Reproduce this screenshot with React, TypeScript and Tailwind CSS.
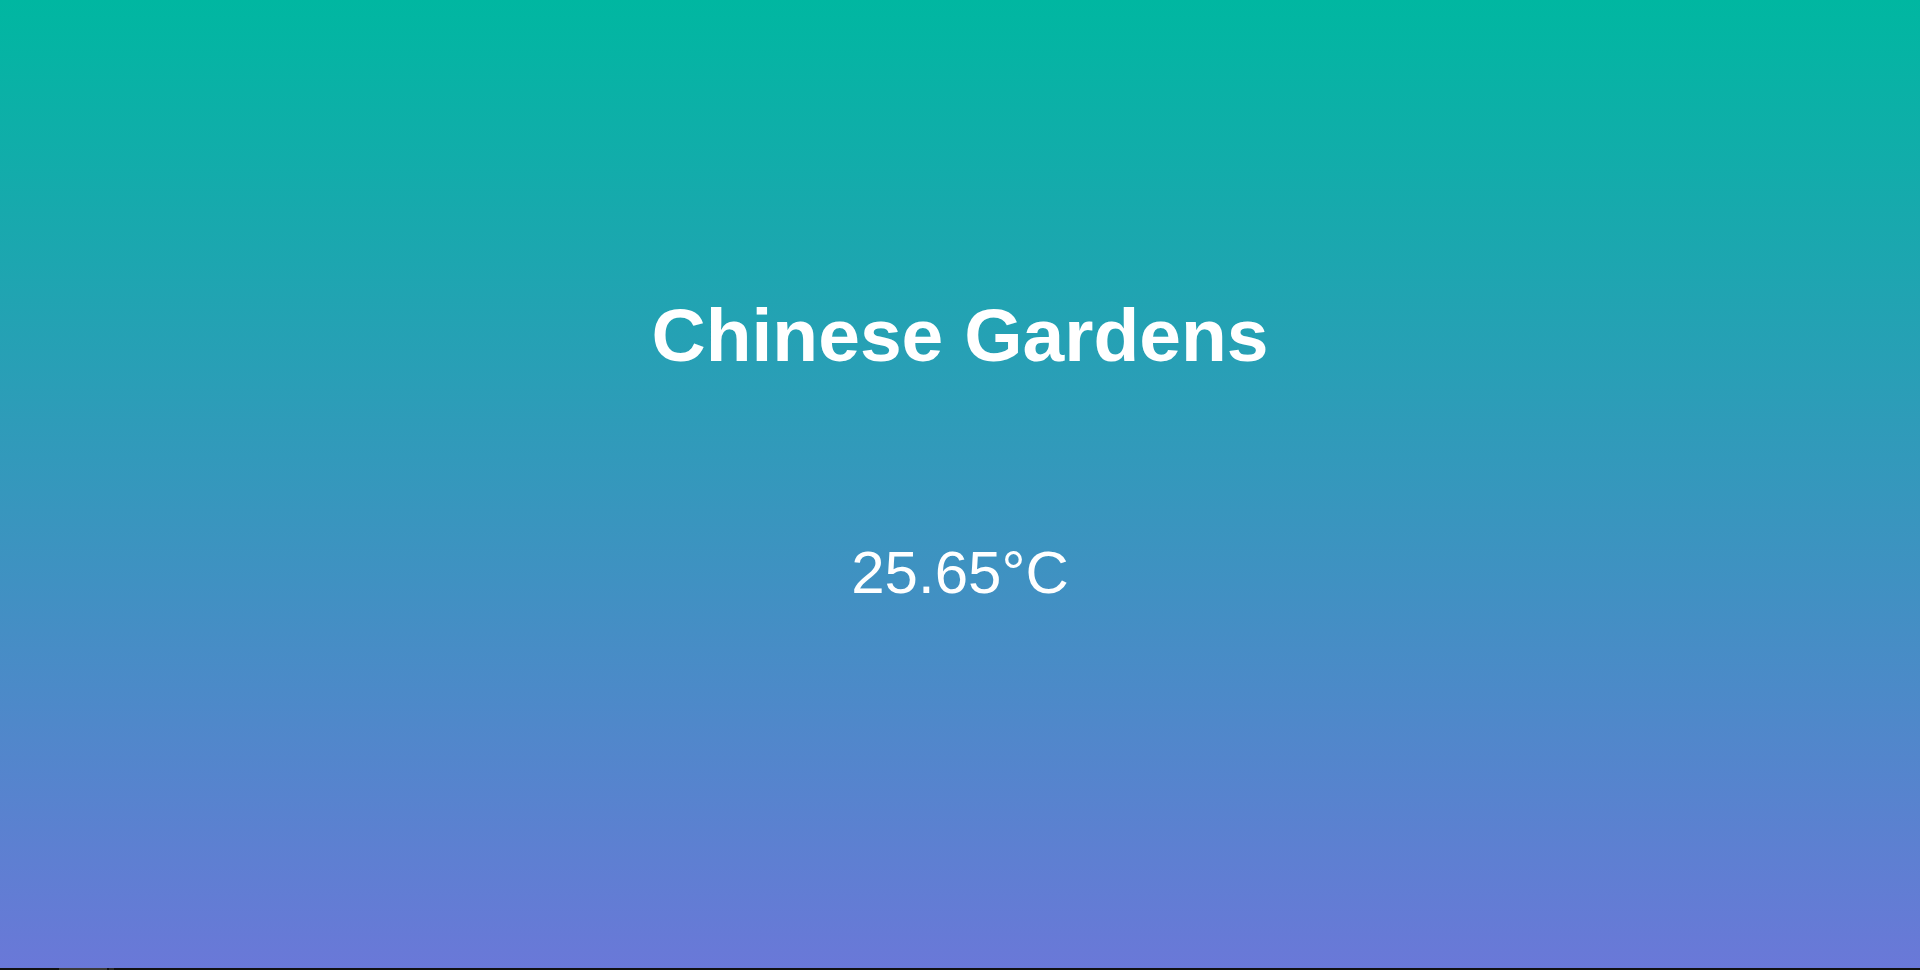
export default function App() {
  return (
    <div className="w-[1920px] h-[970px] flex flex-col overflow-hidden" style={{ fontFamily: '"Liberation Sans", Arial, sans-serif' }}>
      <div className="h-[968px] bg-[linear-gradient(to_bottom,#00b7a1,#6a78d8)] flex flex-col items-center text-white">
        <h1 className="mt-[298px] text-[75px] leading-none font-bold">Chinese Gardens</h1>
        <p className="mt-[170px] text-[60px] leading-none">25.65°C</p>
      </div>
      <div className="h-[2px] bg-[#111111] flex">
        <div className="ml-[59px] w-[48px] bg-[#3a3a3a]" />
        <div className="ml-[2px] w-[5px] bg-[#2a2a2a]" />
      </div>
    </div>
  );
}
